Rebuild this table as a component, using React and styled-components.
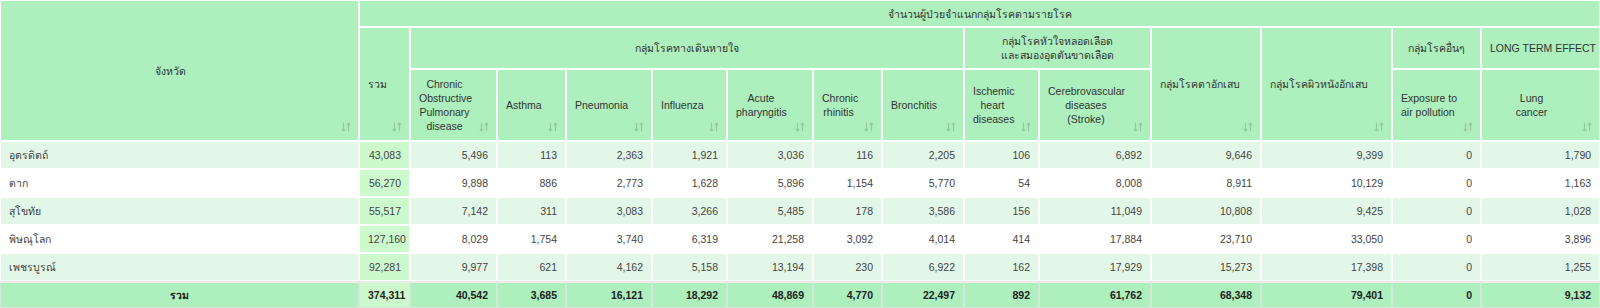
import React from 'react';
import styled, { createGlobalStyle } from 'styled-components';

const GlobalStyle = createGlobalStyle`
  body {
    margin: 0;
    background: #ffffff;
    font-family: "Liberation Sans", Arial, "Noto Sans", sans-serif;
  }
`;

const Table = styled.table`
  width: 1600px;
  table-layout: fixed;
  border-collapse: separate;
  border-spacing: 0;
  font-size: 10.5px;
  color: #333333;
`;

const HeadRow = styled.tr`
  height: ${props => props.h}px;
`;

const Th = styled.th`
  position: relative;
  background-color: #adefbd;
  border: 1px solid #ffffff;
  font-weight: normal;
  text-align: center;
  vertical-align: middle;
  line-height: 14px;
  padding: ${props => (props.sort ? '4px 26px 4px 8px' : '4px 8px')};
  white-space: nowrap;
`;

const SortMark = styled.span`
  position: absolute;
  right: 7px;
  bottom: 8px;
  width: 10px;
  height: 10px;
  display: block;
  svg {
    display: block;
  }
`;

const BodyRow = styled.tr`
  height: 28px;
  background-color: ${props => (props.odd ? '#e3f7e8' : '#ffffff')};
`;

const Td = styled.td`
  border: 1px solid #ffffff;
  padding: 0 8px;
  text-align: ${props => (props.left ? 'left' : 'right')};
  background-color: ${props => (props.sum ? '#ccfacc' : 'transparent')};
  color: #444444;
  white-space: nowrap;
`;

const FootRow = styled.tr`
  height: 27px;
  background-color: #adefbd;
`;

const FootTd = styled.td`
  border: 1px solid #d6e6d8;
  border-top: 2px solid #ececec;
  padding: 0 8px;
  font-weight: bold;
  color: #222222;
  text-align: ${props => (props.center ? 'center' : 'right')};
  background-color: ${props => (props.sum ? '#ccfacc' : 'transparent')};
  white-space: nowrap;
`;

const widths = [359, 51, 87, 69, 86, 75, 86, 69, 82, 75, 112, 110, 131, 89, 119];

const SortIcon = () => (
  <SortMark>
    <svg width="10" height="10" viewBox="0 0 10 10" fill="none" stroke="#94c9a0" strokeWidth="1.2">
      <path d="M2.5 0.8V9M0.8 7.2L2.5 9L4.2 7.2" />
      <path d="M7.5 9.2V1M5.8 2.8L7.5 1L9.2 2.8" />
    </svg>
  </SortMark>
);

const SortTh = ({ children, ...rest }) => (
  <Th sort {...rest}>
    {children}
    <SortIcon />
  </Th>
);

const rows = [
  ['อุตรดิตถ์', '43,083', '5,496', '113', '2,363', '1,921', '3,036', '116', '2,205', '106', '6,892', '9,646', '9,399', '0', '1,790'],
  ['ตาก', '56,270', '9,898', '886', '2,773', '1,628', '5,896', '1,154', '5,770', '54', '8,008', '8,911', '10,129', '0', '1,163'],
  ['สุโขทัย', '55,517', '7,142', '311', '3,083', '3,266', '5,485', '178', '3,586', '156', '11,049', '10,808', '9,425', '0', '1,028'],
  ['พิษณุโลก', '127,160', '8,029', '1,754', '3,740', '6,319', '21,258', '3,092', '4,014', '414', '17,884', '23,710', '33,050', '0', '3,896'],
  ['เพชรบูรณ์', '92,281', '9,977', '621', '4,162', '5,158', '13,194', '230', '6,922', '162', '17,929', '15,273', '17,398', '0', '1,255'],
];

const totals = ['374,311', '40,542', '3,685', '16,121', '18,292', '48,869', '4,770', '22,497', '892', '61,762', '68,348', '79,401', '0', '9,132'];

const App = () => {
  return (
    <>
      <GlobalStyle />
      <Table>
        <colgroup>
          {widths.map((w, i) => (
            <col key={i} style={{ width: w }} />
          ))}
        </colgroup>
        <thead>
          <HeadRow h={27}>
            <SortTh rowSpan={3}>จังหวัด</SortTh>
            <Th colSpan={14}>จำนวนผู้ป่วยจำแนกกลุ่มโรคตามรายโรค</Th>
          </HeadRow>
          <HeadRow h={42}>
            <SortTh rowSpan={2}>รวม</SortTh>
            <Th colSpan={7}>กลุ่มโรคทางเดินหายใจ</Th>
            <Th colSpan={2}>กลุ่มโรคหัวใจหลอดเลือด<br />และสมองอุดตันขาดเลือด</Th>
            <SortTh rowSpan={2}>กลุ่มโรคตาอักเสบ</SortTh>
            <SortTh rowSpan={2}>กลุ่มโรคผิวหนังอักเสบ</SortTh>
            <Th>กลุ่มโรคอื่นๆ</Th>
            <Th>LONG TERM EFFECT</Th>
          </HeadRow>
          <HeadRow h={72}>
            <SortTh>Chronic<br />Obstructive<br />Pulmonary<br />disease</SortTh>
            <SortTh>Asthma</SortTh>
            <SortTh>Pneumonia</SortTh>
            <SortTh>Influenza</SortTh>
            <SortTh>Acute<br />pharyngitis</SortTh>
            <SortTh>Chronic<br />rhinitis</SortTh>
            <SortTh>Bronchitis</SortTh>
            <SortTh>Ischemic<br />heart<br />diseases</SortTh>
            <SortTh>Cerebrovascular<br />diseases<br />(Stroke)</SortTh>
            <SortTh>Exposure to<br />air pollution</SortTh>
            <SortTh>Lung<br />cancer</SortTh>
          </HeadRow>
        </thead>
        <tbody>
          {rows.map((r, i) => (
            <BodyRow key={r[0]} odd={i % 2 === 0}>
              {r.map((v, j) => (
                <Td key={j} left={j === 0} sum={j === 1}>
                  {v}
                </Td>
              ))}
            </BodyRow>
          ))}
        </tbody>
        <tfoot>
          <FootRow>
            <FootTd center>รวม</FootTd>
            {totals.map((v, j) => (
              <FootTd key={j} sum={j === 0}>
                {v}
              </FootTd>
            ))}
          </FootRow>
        </tfoot>
      </Table>
    </>
  );
};

export default App;
